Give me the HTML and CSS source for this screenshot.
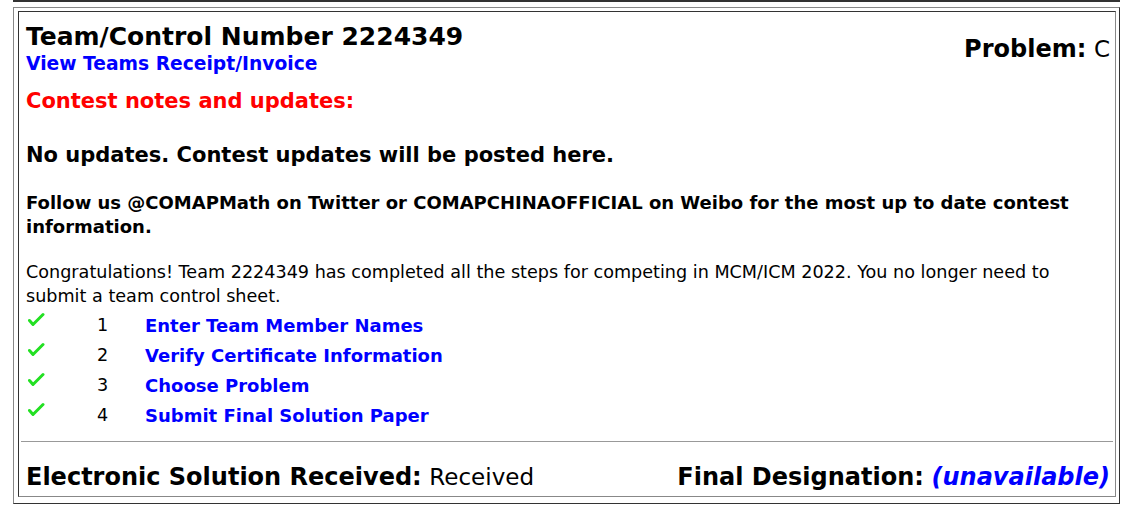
FILE: index.html
```html
<!DOCTYPE html>
<html>
<head>
<meta charset="utf-8">
<link rel="stylesheet" href="styles.css">
</head>
<body>
<div class="topline"></div>
<div class="frame">
  <div class="cell">
    <div class="header">
      <div class="head-left">
        <div class="title">Team/Control Number 2224349</div>
        <a class="receipt" href="#">View Teams Receipt/Invoice</a>
      </div>
      <div class="problem"><b>Problem:</b> <span class="reg">C</span></div>
    </div>
    <div class="notes">Contest notes and updates:</div>
    <div class="noupdates">No updates. Contest updates will be posted here.</div>
    <div class="follow">Follow us @COMAPMath on Twitter or COMAPCHINAOFFICIAL on Weibo for the most up to date contest information.</div>
    <div class="congrats">Congratulations! Team 2224349 has completed all the steps for competing in MCM/ICM 2022. You no longer need to submit a team control sheet.</div>
    <div class="steps">
      <div class="step">
        <svg class="check" viewBox="0 0 18 16" width="18" height="16"><path d="M2.5 8.5 L6 12.5 L16 2.5" fill="none" stroke="#22e022" stroke-width="3" stroke-linecap="round" stroke-linejoin="round"/></svg>
        <span class="num">1</span>
        <a class="steplink" href="#">Enter Team Member Names</a>
      </div>
      <div class="step">
        <svg class="check" viewBox="0 0 18 16" width="18" height="16"><path d="M2.5 8.5 L6 12.5 L16 2.5" fill="none" stroke="#22e022" stroke-width="3" stroke-linecap="round" stroke-linejoin="round"/></svg>
        <span class="num">2</span>
        <a class="steplink" href="#">Verify Certificate Information</a>
      </div>
      <div class="step">
        <svg class="check" viewBox="0 0 18 16" width="18" height="16"><path d="M2.5 8.5 L6 12.5 L16 2.5" fill="none" stroke="#22e022" stroke-width="3" stroke-linecap="round" stroke-linejoin="round"/></svg>
        <span class="num">3</span>
        <a class="steplink" href="#">Choose Problem</a>
      </div>
      <div class="step">
        <svg class="check" viewBox="0 0 18 16" width="18" height="16"><path d="M2.5 8.5 L6 12.5 L16 2.5" fill="none" stroke="#22e022" stroke-width="3" stroke-linecap="round" stroke-linejoin="round"/></svg>
        <span class="num">4</span>
        <a class="steplink" href="#">Submit Final Solution Paper</a>
      </div>
    </div>
    <div class="rule"></div>
    <div class="footer">
      <div class="received"><b>Electronic Solution Received:</b> <span class="reg">Received</span></div>
      <div class="designation"><b>Final Designation:</b> <i class="unavail">(unavailable)</i></div>
    </div>
  </div>
</div>
</body>
</html>
```

FILE: styles.css
```css
html, body {
  margin: 0;
  padding: 0;
  background: #fff;
}
body {
  font-family: "DejaVu Sans", sans-serif;
  color: #000;
}
a {
  color: #0000ff;
  text-decoration: none;
  font-weight: bold;
}
.topline {
  margin-left: 13px;
  width: 1107px;
  height: 0;
  border-top: 2px solid #333;
}
.frame {
  margin: 5px 0 0 13px;
  width: 1107px;
  box-sizing: border-box;
  border: 1px solid;
  border-color: #888 #333 #333 #888;
  padding: 3px 3px 6px 4px;
}
.cell {
  border: 1px solid;
  border-color: #333 #888 #888 #333;
  padding: 10px 2px 4px 7px;
}
.header {
  display: flex;
  justify-content: space-between;
  align-items: center;
}
.head-left {
  display: flex;
  flex-direction: column;
}
.title {
  font-size: 25px;
  font-weight: bold;
  line-height: 30px;
}
.receipt {
  font-size: 18.7px;
  line-height: 24px;
}
.problem {
  font-size: 24px;
  line-height: 30px;
  padding-right: 3px;
}
.reg {
  font-size: 23px;
}
.notes {
  color: #ff0000;
  font-weight: bold;
  font-size: 21px;
  line-height: 26px;
  margin-top: 12px;
}
.noupdates {
  font-weight: bold;
  font-size: 21px;
  line-height: 26px;
  margin-top: 28px;
}
.follow {
  font-weight: bold;
  font-size: 18px;
  line-height: 24px;
  margin-top: 23px;
}
.congrats {
  font-size: 17.6px;
  line-height: 24px;
  margin-top: 21px;
}
.steps {
  display: flex;
  flex-direction: column;
  margin-top: 2px;
}
.step {
  display: flex;
  align-items: center;
  height: 30px;
}
.check {
  align-self: flex-start;
  margin: 2px 0 0 1px;
}
.num {
  font-size: 17.6px;
  margin-left: 52px;
  width: 48px;
}
.steplink {
  font-size: 18px;
}
.rule {
  border-top: 1px solid #999;
  margin: 11px 0 0 -5px;
}
.footer {
  display: flex;
  justify-content: space-between;
  align-items: baseline;
  font-size: 24px;
  line-height: 30px;
  margin-top: 20px;
  padding-right: 3px;
}
.unavail {
  color: #0000ff;
  font-weight: bold;
}
```
